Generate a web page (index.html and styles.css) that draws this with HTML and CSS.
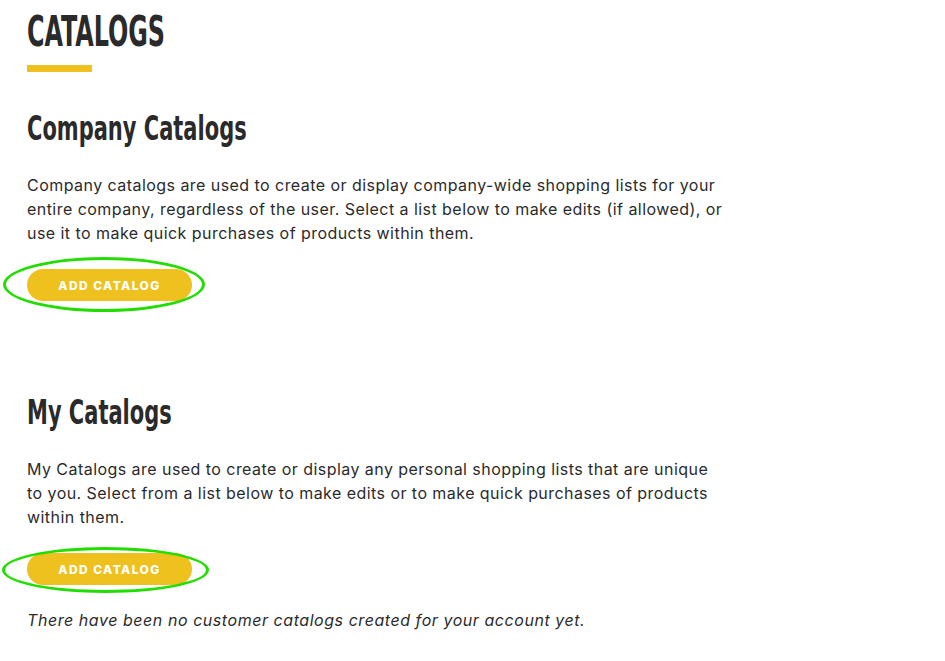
FILE: index.html
```html
<!DOCTYPE html>
<html lang="en">
<head>
  <meta charset="UTF-8" />
  <meta name="viewport" content="width=device-width, initial-scale=1.0"/>
  <title>Catalogs</title>

  <link rel="stylesheet" href="styles.css">
</head>
<body>

  <main class="catalogs-page">
    <h1 class="page-title">CATALOGS</h1>
    <div class="title-bar"></div>

    <section class="catalog-section">
      <h2 class="section-title">Company Catalogs</h2>
      <p class="section-text">Company catalogs are used to create or display company-wide shopping lists for your entire company, regardless of the user. Select a list below to make edits (if allowed), or use it to make quick purchases of products within them.</p>
      <div class="btn-wrap">
        <button class="add-btn">ADD CATALOG</button>
        <span class="mark mark-first"></span>
      </div>
    </section>

    <section class="catalog-section my-section">
      <h2 class="section-title">My Catalogs</h2>
      <p class="section-text">My Catalogs are used to create or display any personal shopping lists that are unique to you. Select from a list below to make edits or to make quick purchases of products within them.</p>
      <div class="btn-wrap">
        <button class="add-btn">ADD CATALOG</button>
        <span class="mark mark-second"></span>
      </div>
      <p class="empty-note">There have been no customer catalogs created for your account yet.</p>
    </section>
  </main>

</body>
</html>
```

FILE: styles.css
```css
* {
  margin: 0;
  padding: 0;
  box-sizing: border-box;
}

html, body {
  background: #ffffff;
  color: #282828;
  font-family: Inter, "Noto Sans", sans-serif;
}

.catalogs-page {
  padding: 7px 27px 0 27px;
}

.page-title,
.section-title {
  font-family: "DejaVu Sans Condensed", "DejaVu Sans", sans-serif;
  font-weight: bold;
  color: #2a2a2a;
  transform-origin: left center;
}

.page-title {
  font-size: 42px;
  line-height: 50px;
  transform: scaleX(0.632);
}

.title-bar {
  width: 65px;
  height: 7px;
  margin-top: 8px;
  background: #eec11f;
}

.section-title {
  font-size: 34px;
  line-height: 40px;
  transform: scaleX(0.686);
}

.catalog-section {
  margin-top: 36px;
}

.my-section {
  margin-top: 91px;
}

.section-text {
  max-width: 697px;
  margin-top: 25px;
  font-size: 16px;
  line-height: 24px;
  letter-spacing: 0.45px;
  color: #2b2b2b;
}

.btn-wrap {
  position: relative;
  display: inline-block;
  margin-top: 24px;
}

.add-btn {
  display: block;
  width: 165px;
  height: 32px;
  border: none;
  border-radius: 16px;
  background: #eec11f;
  color: white;
  font-family: Inter, "Noto Sans", sans-serif;
  font-size: 12px;
  font-weight: 800;
  letter-spacing: 1.4px;
  cursor: pointer;
}

.mark {
  position: absolute;
  border: 3px solid #22dd00;
  border-radius: 50%;
  pointer-events: none;
}

.mark-first {
  left: -24px;
  right: -13px;
  top: -12px;
  bottom: -11px;
}

.mark-second {
  left: -25px;
  right: -17px;
  top: -6px;
  bottom: -8px;
}

.empty-note {
  margin-top: 23px;
  font-size: 16px;
  line-height: 24px;
  font-style: italic;
  letter-spacing: 0.55px;
  color: #2b2b2b;
}
```
